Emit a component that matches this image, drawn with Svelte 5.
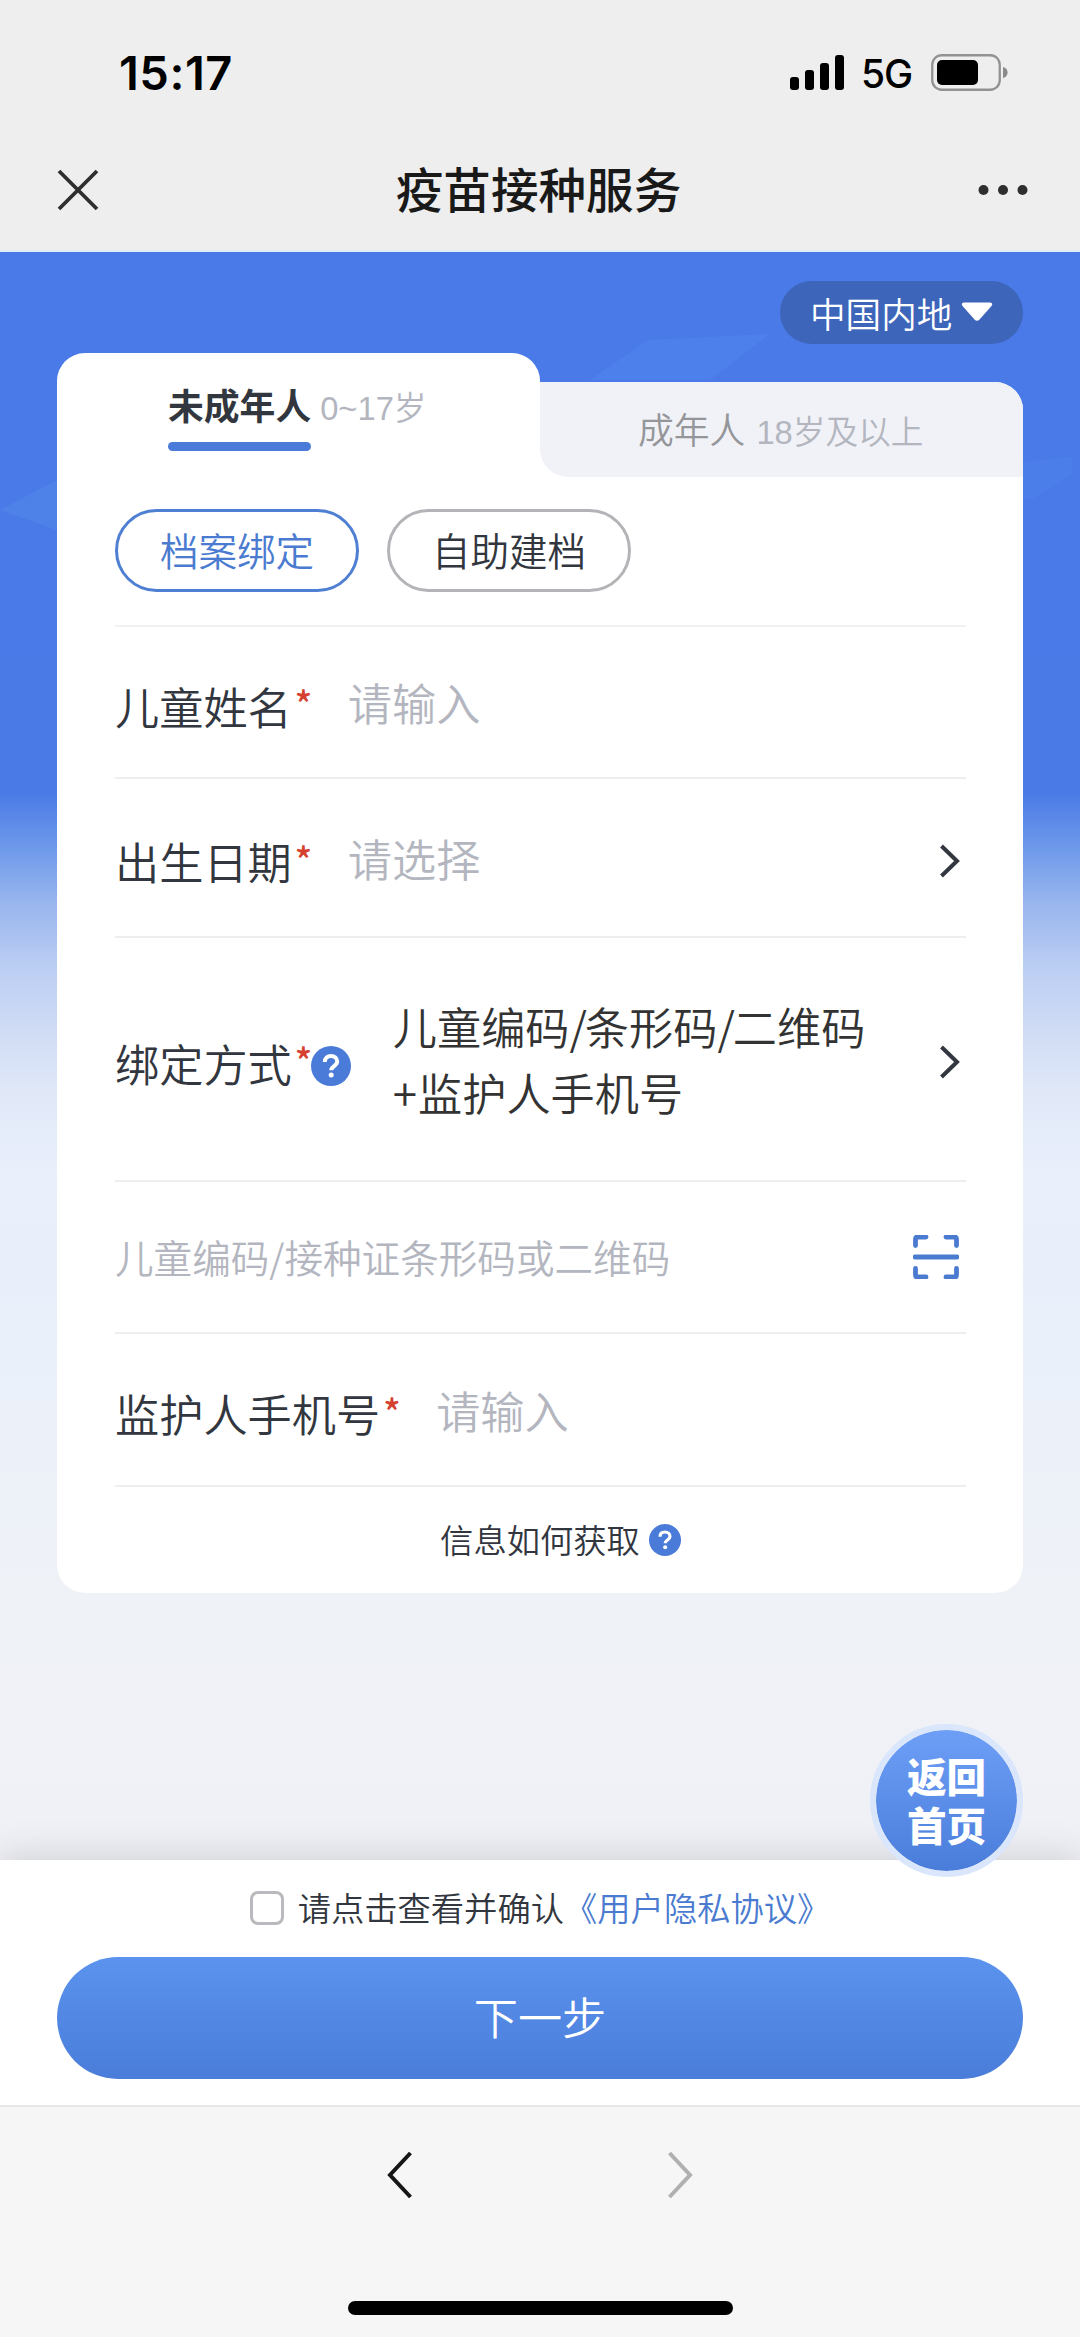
<script>
    let mode = 'bind';
    let agreed = false;
    let childName = '';
    let childCode = '';
    let phone = '';

    const bars = [13, 20, 27, 35];
    const modes = [
        { id: 'bind', text: '档案绑定' },
        { id: 'create', text: '自助建档' },
    ];
</script>

<div class="screen">
    <header>
        <div class="status">
            <span class="time">15:17</span>
            <div class="status-right">
                <div class="signal">
                    {#each bars as h}
                        <i style="height: {h}px"></i>
                    {/each}
                </div>
                <span class="network">5G</span>
                <svg class="battery" width="77" height="37" viewBox="0 0 77 37">
                    <rect x="1.25" y="1.25" width="67.5" height="34.5" rx="9.5" fill="none" stroke="#929292" stroke-width="2.3" />
                    <rect x="6" y="6" width="41" height="25" rx="5" fill="#000" />
                    <path d="M72 13c3 .8 4.600 3 4.600 5.500S75 23.200 72 24z" fill="#8a8a8a" />
                </svg>
            </div>
        </div>
        <div class="title-bar">
            <svg width="42" height="42" viewBox="0 0 42 42">
                <path d="M2 2l38 38M40 2L2 40" stroke="#2e2e2e" stroke-width="3.800" />
            </svg>
            <h1>疫苗接种服务</h1>
            <svg width="50" height="12" viewBox="0 0 50 12" fill="#2e2e2e">
                <circle cx="5.500" cy="6" r="5" />
                <circle cx="25" cy="6" r="5" />
                <circle cx="44.500" cy="6" r="5" />
            </svg>
        </div>
    </header>

    <main>
        <svg class="decor" width="1080" height="300" viewBox="0 0 1080 300">
            <path d="M0 258L57 228V278Z" fill="#4e82e9" />
            <path d="M590 128L648 88L770 82L710 128Z" fill="#4d80ea" />
            <path d="M1023 210L1072 205V222L1034 246L1023 248Z" fill="#4c7ee9" />
        </svg>

        <div class="region-line">
            <button class="region">
                中国内地
                <svg width="32" height="20" viewBox="0 0 32 20">
                    <path d="M3 0.500H29Q32.500 1 30.500 4L18.500 17.500Q16 20 13.500 17.500L1.500 4Q-.5 1 3 .5Z" fill="#fff" />
                </svg>
            </button>
        </div>

        <div class="tabs">
            <div class="tab active">
                <span class="tab-name">未成年人</span><span class="age">0~17岁</span>
            </div>
            <div class="tab-back">
                <div class="tab">
                    <span class="tab-name">成年人</span><span class="age">18岁及以上</span>
                </div>
            </div>
        </div>

        <section class="card">
            <div class="modes">
                {#each modes as m}
                    <button class="mode" class:selected={mode === m.id} on:click={() => (mode = m.id)}>{m.text}</button>
                {/each}
            </div>

            <label class="row">
                <span class="label">儿童姓名</span><span class="star">*</span>
                <input type="text" placeholder="请输入" bind:value={childName} />
            </label>

            <div class="row date">
                <span class="label">出生日期</span><span class="star">*</span>
                <span class="placeholder">请选择</span>
                <svg class="arrow" width="21" height="36" viewBox="0 0 21 36">
                    <path d="M2.500 3L18 18L2.500 33" />
                </svg>
            </div>

            <div class="row way">
                <span class="label">绑定方式</span><span class="star">*</span>
                <svg class="help" width="40" height="40" viewBox="0 0 40 40">
                    <circle cx="20" cy="20" r="20" fill="#4a7bd9" />
                    <path d="M13.800 16C13.800 12 16.500 10 20 10s6.200 2.200 6.200 5.600c0 4.400-6 4.400-6 8.600" fill="none" stroke="#fff" stroke-width="4" />
                    <circle cx="20.200" cy="29" r="2.500" fill="#fff" />
                </svg>
                <span class="value">儿童编码<i>/</i>条形码<i>/</i>二维码<br /><span class="plus">+</span>监护人手机号</span>
                <svg class="arrow" width="21" height="36" viewBox="0 0 21 36">
                    <path d="M2.500 3L18 18L2.500 33" />
                </svg>
            </div>

            <label class="row code">
                <input type="text" placeholder="儿童编码/接种证条形码或二维码" bind:value={childCode} />
                <svg class="scan" width="46" height="44" viewBox="0 0 46 44">
                    <path d="M2.500 10.500V4Q2.500 2 4.500 2H13M33 2h8.500Q43.500 2 43.500 4v6.500M2.500 33.500V40Q2.500 42 4.500 42H13M33 42h8.500Q43.500 42 43.500 40V33.500M2 22H44" />
                </svg>
            </label>

            <label class="row phone">
                <span class="label">监护人手机号</span><span class="star">*</span>
                <input type="text" placeholder="请输入" bind:value={phone} />
            </label>

            <div class="info">
                <span>信息如何获取</span>
                <svg width="32" height="32" viewBox="0 0 40 40">
                    <circle cx="20" cy="20" r="20" fill="#4a7bd9" />
                    <path d="M13.800 16C13.800 12 16.500 10 20 10s6.200 2.200 6.200 5.600c0 4.400-6 4.400-6 8.600" fill="none" stroke="#fff" stroke-width="4" />
                    <circle cx="20.200" cy="29" r="2.500" fill="#fff" />
                </svg>
            </div>
        </section>
    </main>

    <footer>
        <button class="home">返回<br />首页</button>
        <label class="agree">
            <input type="checkbox" bind:checked={agreed} />
            <span>请点击查看并确认<b>《用户隐私协议》</b></span>
        </label>
        <button class="next">下一步</button>
    </footer>

    <nav>
        <div class="history">
            <svg width="28" height="50" viewBox="0 0 28 50">
                <path d="M24.500 3L4 25L24.500 47" fill="none" stroke="#161616" stroke-width="4" />
            </svg>
            <svg width="28" height="50" viewBox="0 0 28 50">
                <path d="M3.500 3L24 25L3.500 47" fill="none" stroke="#b0b0b0" stroke-width="4" />
            </svg>
        </div>
        <div class="indicator"></div>
    </nav>
</div>

<style>
    :global(body) {
        margin: 0;
    }

    .screen {
        width: 1080px;
        height: 2337px;
        display: flex;
        flex-direction: column;
        overflow: hidden;
        font-family: "Noto Sans CJK SC", sans-serif;
        font-weight: 350;
        color: #32363e;
    }

    .screen * {
        box-sizing: border-box;
    }

    button,
    input {
        font-family: inherit;
        font-weight: inherit;
        border: none;
        padding: 0;
        margin: 0;
        outline: none;
    }

    svg {
        display: block;
        flex: none;
    }

    header {
        height: 252px;
        background: #eeeeee;
        border-bottom: 2px solid #e3edf6;
    }

    .status {
        height: 144px;
        padding: 0 72px 0 119px;
        display: flex;
        align-items: center;
        justify-content: space-between;
        font-family: Inter, sans-serif;
        color: #000;
    }

    .time {
        font-size: 47px;
        font-weight: 600;
        letter-spacing: 0.5px;
    }

    .status-right {
        display: flex;
        align-items: center;
    }

    .signal {
        display: flex;
        align-items: flex-end;
        gap: 5.500px;
    }

    .signal i {
        width: 9.500px;
        border-radius: 3px;
        background: #000;
    }

    .network {
        margin: 2px 19px 0 17px;
        width: 51px;
        font-size: 39px;
        font-weight: 500;
        letter-spacing: -1px;
        white-space: nowrap;
    }

    .title-bar {
        height: 92px;
        padding: 0 52px 0 57px;
        display: flex;
        align-items: center;
        justify-content: space-between;
    }

    h1 {
        margin: 0;
        font-size: 47.600px;
        line-height: 60px;
        font-weight: 500;
        color: #191919;
        padding-bottom: 4px;
    }

    main {
        position: relative;
        height: 1608px;
        padding: 29px 57px 0 57px;
        background: linear-gradient(#4a7ae8 0, #4a7ae6 540px, #6f9aea 598px, #98b5ee 650px, #bacdf3 713px, #d0dcf5 780px, #e0e8f8 840px, #e9effb 915px, #eaf0fa 1100px, #eff2f7 1350px, #f0f1f6 1608px);
    }

    .decor {
        position: absolute;
        left: 0;
        top: 0;
    }

    .region-line {
        position: relative;
        display: flex;
        justify-content: flex-end;
        height: 72px;
    }

    .region {
        display: flex;
        align-items: center;
        gap: 9px;
        width: 243px;
        height: 63px;
        padding: 0 0 1px 30px;
        border-radius: 32px;
        background: #3d65ba;
        color: #fff;
        font-size: 35.600px;
    }

    .tabs {
        position: relative;
        display: flex;
        align-items: flex-end;
        height: 124px;
    }

    .tab {
        flex: 1;
        white-space: nowrap;
    }

    .tab.active {
        height: 124px;
        padding: 26px 0 0 111px;
        background: #fff;
        border-radius: 28px 28px 0 0;
    }

    .tab-name {
        position: relative;
        display: inline-block;
        font-size: 35.800px;
        line-height: 50px;
    }

    .active .tab-name {
        font-weight: 700;
    }

    .active .tab-name::after {
        content: "";
        position: absolute;
        left: 0;
        right: 0;
        bottom: -22px;
        height: 9px;
        border-radius: 5px;
        background: #4a7bd9;
    }

    .age {
        margin-left: 9px;
        font-family: "Liberation Sans", "Noto Sans CJK SC", sans-serif;
        font-size: 32.700px;
        color: #b3b6bf;
    }

    .tab-back {
        width: 483px;
        background: #fff;
        border-top-right-radius: 28px;
    }

    .tab-back .tab {
        height: 95px;
        padding: 21px 0 0 98px;
        background: #f1f2f7;
        border-radius: 0 28px 0 28px;
        color: #949699;
    }

    .tab-back .age {
        margin-left: 11px;
    }

    .card {
        position: relative;
        height: 1116px;
        padding: 0 57px 0 58px;
        background: #fff;
        border-radius: 0 0 28px 28px;
    }

    .modes {
        display: flex;
        gap: 28px;
        height: 150px;
        padding-top: 32px;
        border-bottom: 2px solid #eff1f2;
    }

    .mode {
        width: 244px;
        height: 83px;
        padding-bottom: 3px;
        border: 3px solid #b3b4b7;
        border-radius: 42px;
        background: #fff;
        color: #32363e;
        font-size: 38.500px;
    }

    .mode.selected {
        border-color: #4f7fd2;
        color: #4a7bd0;
    }

    .row {
        display: flex;
        align-items: center;
        height: 152px;
        border-bottom: 2px solid #eceef0;
        font-size: 44.200px;
        line-height: 66px;
    }

    .row.date {
        height: 159px;
    }

    .row.way {
        height: 244px;
    }

    .row.phone {
        height: 153px;
    }

    .label {
        padding-top: 7px;
    }

    .star {
        width: 24px;
        padding-left: 3px;
        font-size: 36px;
        font-weight: 500;
        color: #d5402f;
    }

    .row input {
        flex: 1;
        min-width: 0;
        height: 66px;
        margin-left: 32px;
        background: none;
        font-size: inherit;
        color: #32363e;
    }

    .row input::placeholder,
    .placeholder {
        color: #b3b6bf;
        opacity: 1;
    }

    .placeholder {
        margin-left: 32px;
    }

    .row.code input {
        margin: 0 0 3px;
        font-size: 38.600px;
    }

    .arrow {
        margin: 6px 6px 0 auto;
        fill: none;
        stroke: #32363e;
        stroke-width: 4;
    }

    .help {
        margin: 13px 0 0 -5px;
    }

    .value {
        margin-left: 42px;
        color: #333;
        white-space: nowrap;
    }

    .value i {
        font-style: normal;
        letter-spacing: -2px;
    }

    .plus {
        margin-right: 1px;
    }

    .scan {
        margin-right: 7px;
        fill: none;
        stroke: #4a7bd0;
        stroke-width: 4.800;
        stroke-linecap: round;
    }

    .info {
        display: flex;
        align-items: center;
        justify-content: center;
        gap: 9px;
        height: 106px;
        padding-left: 40px;
        font-size: 33.300px;
    }

    .info span {
        padding-bottom: 3px;
    }

    footer {
        position: relative;
        height: 245px;
        padding: 0 57px;
        background: #fff;
        box-shadow: 0 0 36px rgba(60, 65, 75, 0.22);
    }

    .home {
        position: absolute;
        right: 57px;
        top: -136px;
        width: 153px;
        height: 153px;
        padding-bottom: 4px;
        border: 6px solid #d9e6fb;
        border-radius: 50%;
        background: linear-gradient(#6d9ff7, #4a7dda) padding-box;
        color: #fff;
        font-size: 39.500px;
        font-weight: 900;
        line-height: 49px;
    }

    .agree {
        display: flex;
        align-items: center;
        justify-content: center;
        height: 97px;
        padding-bottom: 1px;
        font-size: 33.300px;
    }

    .agree input {
        appearance: none;
        width: 34px;
        height: 34px;
        margin-right: 14px;
        border: 3px solid #b8babd;
        border-radius: 8px;
    }

    .agree span {
        padding-bottom: 4px;
    }

    .agree b {
        font-weight: inherit;
        color: #4a7bd0;
    }

    .next {
        display: block;
        width: 100%;
        height: 122px;
        padding-bottom: 5px;
        border-radius: 61px;
        background: linear-gradient(#5b93ee, #497dd9);
        color: #fff;
        font-size: 44.200px;
    }

    nav {
        position: relative;
        flex: 1;
        background: #f6f6f6;
        border-top: 2px solid #e6e6e6;
    }

    .history {
        display: flex;
        justify-content: center;
        gap: 252px;
        padding-top: 43px;
    }

    .indicator {
        width: 385px;
        height: 14px;
        margin: 101px auto 0;
        border-radius: 7px;
        background: #000;
    }
</style>
